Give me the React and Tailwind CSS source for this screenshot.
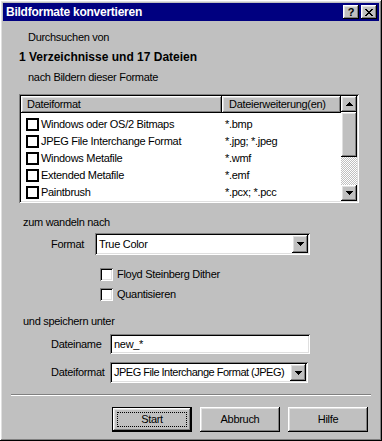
import React from 'react';

const raised =
  'shadow-[inset_-1px_-1px_#000,inset_1px_1px_#fff,inset_-2px_-2px_#808080,inset_2px_2px_#dfdfdf]';
const sunken =
  'shadow-[inset_1px_1px_#808080,inset_-1px_-1px_#fff,inset_2px_2px_#000,inset_-2px_-2px_#dfdfdf]';

const Arrow = ({ up }) => (
  <svg width="7" height="4" viewBox="0 0 7 4" className="block">
    {up ? <path d="M3 0h1v1h1v1h1v1h1v1H0V3h1V2h1V1h1z" fill="#000" /> : <path d="M0 0h7v1H6v1H5v1H4v1H3V3H2V2H1V1H0z" fill="#000" />}
  </svg>
);

const Combo = ({ value, className }) => (
  <div className={`bg-white ${sunken} p-[2px] flex items-stretch ${className}`}>
    <div className="flex-1 pl-[2px] flex items-center whitespace-nowrap overflow-hidden">{value}</div>
    <div className={`w-[16px] bg-[#c0c0c0] ${raised} flex items-center justify-center`}>
      <Arrow />
    </div>
  </div>
);

const CheckBox = () => <div className={`w-[13px] h-[13px] bg-white ${sunken}`} />;

const rows = [
  ['Windows oder OS/2 Bitmaps', '*.bmp'],
  ['JPEG File Interchange Format', '*.jpg; *.jpeg'],
  ['Windows Metafile', '*.wmf'],
  ['Extended Metafile', '*.emf'],
  ['Paintbrush', '*.pcx; *.pcc'],
];

const Button = ({ children, def }) => (
  <div className={`w-[80px] h-[25px] ${def ? 'border border-black' : ''}`}>
    <div className={`relative w-full h-full bg-[#c0c0c0] ${raised} flex items-center justify-center`}>
      {def && <div className="absolute inset-[4px] border border-dotted border-black" />}
      {children}
    </div>
  </div>
);

export default function App() {
  return (
    <div
      className={`w-[382px] h-[441px] bg-[#c0c0c0] p-[3px] flex flex-col text-[11px] tracking-[-0.3px] text-black ${raised}`}
      style={{ fontFamily: '"Liberation Sans", Arial, sans-serif' }}
    >
      {/* title bar */}
      <div className="h-[18px] bg-[#000080] flex items-center pl-[3px] pr-[2px]">
        <span className="text-white font-bold text-[12px] tracking-[-0.25px] leading-none">Bildformate konvertieren</span>
        <div className="ml-auto flex gap-[2px]">
          <div className={`w-[16px] h-[14px] bg-[#c0c0c0] ${raised} flex items-center justify-center font-bold text-[11px] leading-none`}>?</div>
          <div className={`w-[16px] h-[14px] bg-[#c0c0c0] ${raised} flex items-center justify-center`}>
            <svg width="8" height="7" viewBox="0 0 8 7">
              <path d="M0 0h2v1h1v1h2V1h1V0h2v1H7v1H6v1H5v1h1v1h1v1h1v1H6V6H5V5H3v1H2v1H0V6h1V5h1V4h1V3H2V2H1V1H0z" fill="#000" />
            </svg>
          </div>
        </div>
      </div>

      <div className="mt-[10px] pl-[25px] leading-[13px]">Durchsuchen von</div>
      <div className="mt-[6px] pl-[16px] leading-[14px] font-bold text-[12px] tracking-normal">1 Verzeichnisse und 17 Dateien</div>
      <div className="mt-[7px] pl-[25px] leading-[13px]">nach Bildern dieser Formate</div>

      {/* list view */}
      <div className={`mt-[10px] ml-[16px] w-[340px] h-[109px] bg-white ${sunken} p-[2px] flex`}>
        <div className="w-[320px] flex flex-col overflow-hidden">
          <div className="flex h-[17px] shrink-0">
            <div className={`w-[201px] bg-[#c0c0c0] ${raised} pl-[6px] flex items-center`}>Dateiformat</div>
            <div className={`flex-1 bg-[#c0c0c0] ${raised} pl-[7px] flex items-center`}>Dateierweiterung(en)</div>
          </div>
          <div className="pt-[3px]">
            {rows.map(([name, ext]) => (
              <div key={name} className="h-[17px] flex items-center">
                <div className="w-[13px] h-[13px] ml-[5px] border-2 border-black bg-white" />
                <div className="w-[186px] pl-[2px] whitespace-nowrap">{name}</div>
                <div className="whitespace-nowrap">{ext}</div>
              </div>
            ))}
          </div>
        </div>
        <div className="w-[16px] flex flex-col">
          <div className={`h-[16px] bg-[#c0c0c0] ${raised} flex items-center justify-center`}>
            <Arrow up />
          </div>
          <div className={`h-[45px] bg-[#c0c0c0] ${raised}`} />
          <div className="h-[28px] bg-[repeating-conic-gradient(#c0c0c0_0%_25%,#fff_0%_50%)] bg-[length:2px_2px]" />
          <div className={`h-[16px] bg-[#c0c0c0] ${raised} flex items-center justify-center`}>
            <Arrow />
          </div>
        </div>
      </div>

      <div className="mt-[13px] pl-[20px] leading-[13px]">zum wandeln nach</div>
      <div className="mt-[4px] h-[22px] flex items-center pl-[48px]">
        <div className="w-[44px]">Format</div>
        <Combo value="True Color" className="w-[215px] h-full" />
      </div>

      <div className="mt-[13px] h-[13px] flex items-center pl-[97px]">
        <CheckBox />
        <span className="ml-[4px]">Floyd Steinberg Dither</span>
      </div>
      <div className="mt-[7px] h-[13px] flex items-center pl-[97px]">
        <CheckBox />
        <span className="ml-[4px]">Quantisieren</span>
      </div>

      <div className="mt-[14px] pl-[20px] leading-[13px]">und speichern unter</div>
      <div className="mt-[6px] h-[20px] flex items-center pl-[48px]">
        <div className="w-[59px]">Dateiname</div>
        <div className={`w-[200px] h-full bg-white ${sunken} pl-[4px] flex items-center`}>new_*</div>
      </div>
      <div className="mt-[8px] h-[21px] flex items-center pl-[48px]">
        <div className="w-[59px]">Dateiformat</div>
        <Combo value="JPEG File Interchange Format (JPEG)" className="w-[198px] h-full tracking-[-0.5px]" />
      </div>

      <div className="mt-[11px] ml-[8px] w-[360px] border-t border-[#808080] border-b border-b-white" />

      <div className="mt-[11px] pl-[109px] flex gap-[8px]">
        <Button def>Start</Button>
        <Button>Abbruch</Button>
        <Button>Hilfe</Button>
      </div>
    </div>
  );
}
